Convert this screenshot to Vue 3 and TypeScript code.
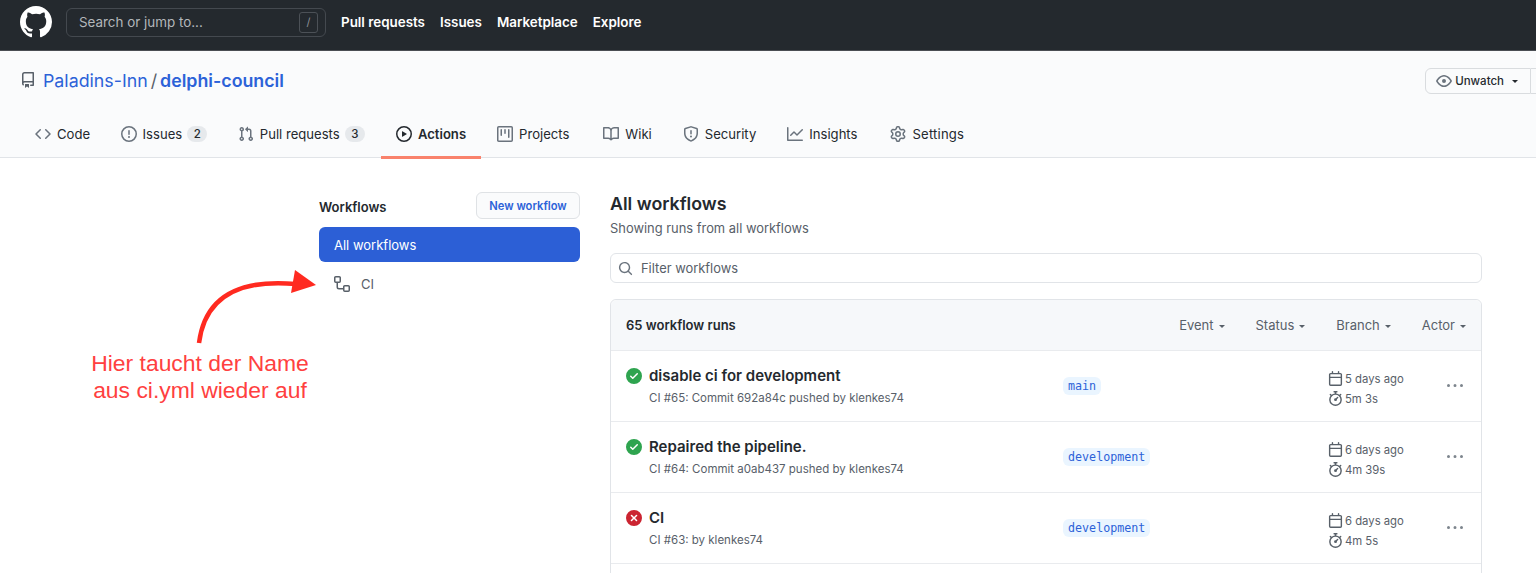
<script setup lang="ts">
const icons: Record<string, string> = {
  github: 'M8 0C3.58 0 0 3.58 0 8c0 3.54 2.29 6.53 5.47 7.59.4.07.55-.17.55-.38 0-.19-.01-.82-.01-1.49-2.01.37-2.53-.49-2.69-.94-.09-.23-.48-.94-.82-1.13-.28-.15-.68-.52-.01-.53.63-.01 1.08.58 1.23.82.72 1.21 1.87.87 2.33.66.07-.52.28-.87.51-1.07-1.78-.2-3.64-.89-3.64-3.95 0-.87.31-1.59.82-2.15-.08-.2-.36-1.02.08-2.12 0 0 .67-.21 2.2.82.64-.18 1.32-.27 2-.27.68 0 1.36.09 2 .27 1.53-1.04 2.2-.82 2.2-.82.44 1.1.16 1.92.08 2.12.51.56.82 1.27.82 2.15 0 3.07-1.87 3.75-3.65 3.95.29.25.54.73.54 1.48 0 1.07-.01 1.93-.01 2.2 0 .21.15.46.55.38A8.013 8.013 0 0016 8c0-4.42-3.58-8-8-8z',
  repo: 'M2 2.5A2.5 2.5 0 014.5 0h8.75a.75.75 0 01.75.75v12.5a.75.75 0 01-.75.75h-2.5a.75.75 0 110-1.5h1.75v-2h-8a1 1 0 00-.714 1.7.75.75 0 01-1.072 1.05A2.495 2.495 0 012 11.5v-9zm10.5-1V9h-8c-.356 0-.694.074-1 .208V2.5a1 1 0 011-1h8zM5 12.25v3.25a.25.25 0 00.4.2l1.45-1.087a.25.25 0 01.3 0L8.6 15.7a.25.25 0 00.4-.2v-3.25a.25.25 0 00-.25-.25h-3.5a.25.25 0 00-.25.25z',
  code: 'M4.72 3.22a.75.75 0 011.06 1.06L2.06 8l3.72 3.72a.75.75 0 11-1.06 1.06L.47 8.53a.75.75 0 010-1.06l4.25-4.25zm6.56 0a.75.75 0 10-1.06 1.06L13.94 8l-3.72 3.72a.75.75 0 101.06 1.06l4.25-4.25a.75.75 0 000-1.06l-4.25-4.25z',
  issue: 'M8 1.5a6.5 6.5 0 100 13 6.5 6.5 0 000-13zM0 8a8 8 0 1116 0A8 8 0 010 8zm9 3a1 1 0 11-2 0 1 1 0 012 0zm-.25-6.25a.75.75 0 00-1.5 0v3.5a.75.75 0 001.5 0v-3.5z',
  pull: 'M7.177 3.073L9.573.677A.25.25 0 0110 .854v4.792a.25.25 0 01-.427.177L7.177 3.427a.25.25 0 010-.354zM3.75 2.5a.75.75 0 100 1.5.75.75 0 000-1.5zm-2.25.75a2.25 2.25 0 113 2.122v5.256a2.251 2.251 0 11-1.5 0V5.372A2.25 2.25 0 011.5 3.25zM11 2.5h-1V4h1a1 1 0 011 1v5.628a2.251 2.251 0 101.5 0V5A2.5 2.5 0 0011 2.5zm1 10.25a.75.75 0 111.5 0 .75.75 0 01-1.5 0zM3.75 12a.75.75 0 100 1.5.75.75 0 000-1.5z',
  play: 'M1.5 8a6.5 6.5 0 1113 0 6.5 6.5 0 01-13 0zM8 0a8 8 0 100 16A8 8 0 008 0zM6.379 5.227A.25.25 0 006 5.442v5.117a.25.25 0 00.379.214l4.264-2.559a.25.25 0 000-.428L6.379 5.227z',
  project: 'M1.75 0A1.75 1.75 0 000 1.75v12.5C0 15.216.784 16 1.75 16h12.5A1.75 1.75 0 0016 14.25V1.75A1.75 1.75 0 0014.25 0H1.75zM1.5 1.75a.25.25 0 01.25-.25h12.5a.25.25 0 01.25.25v12.5a.25.25 0 01-.25.25H1.75a.25.25 0 01-.25-.25V1.75zM11.75 3a.75.75 0 00-.75.75v7.5a.75.75 0 001.5 0v-7.5a.75.75 0 00-.75-.75zm-8.25.75a.75.75 0 011.5 0v5.5a.75.75 0 01-1.5 0v-5.5zM8 3a.75.75 0 00-.75.75v3.5a.75.75 0 001.5 0v-3.5A.75.75 0 008 3z',
  book: 'M0 1.75A.75.75 0 01.75 1h4.253c1.227 0 2.317.59 3 1.501A3.744 3.744 0 0111.006 1h4.245a.75.75 0 01.75.75v10.5a.75.75 0 01-.75.75h-4.507a2.25 2.25 0 00-1.591.659l-.622.621a.75.75 0 01-1.06 0l-.622-.621A2.25 2.25 0 005.258 13H.75a.75.75 0 01-.75-.75V1.75zm8.755 3a2.25 2.25 0 012.25-2.25H14.5v9h-3.757c-.71 0-1.4.201-1.992.572l.004-7.322zm-1.504 7.324l.004-5.073-.002-2.253A2.25 2.25 0 005.003 2.5H1.5v9h3.757a3.75 3.75 0 011.994.574z',
  shield: 'M7.467.133a1.75 1.75 0 011.066 0l5.25 1.68A1.75 1.75 0 0115 3.48V7c0 1.566-.32 3.182-1.303 4.682-.983 1.498-2.585 2.813-5.032 3.855a1.7 1.7 0 01-1.33 0c-2.447-1.042-4.049-2.357-5.032-3.855C1.32 10.182 1 8.566 1 7V3.48a1.75 1.75 0 011.217-1.667l5.25-1.68zm.61 1.429a.25.25 0 00-.153 0l-5.25 1.68a.25.25 0 00-.174.238V7c0 1.358.275 2.666 1.057 3.86.784 1.194 2.121 2.34 4.366 3.297a.2.2 0 00.154 0c2.245-.956 3.582-2.104 4.366-3.298C13.225 9.666 13.5 8.36 13.5 7V3.48a.25.25 0 00-.174-.237l-5.25-1.68zM9 10.5a1 1 0 11-2 0 1 1 0 012 0zm-.25-5.75a.75.75 0 10-1.5 0v3a.75.75 0 001.5 0v-3z',
  graph: 'M1.5 1.75a.75.75 0 00-1.5 0v12.5c0 .414.336.75.75.75h14.5a.75.75 0 000-1.5H1.5V1.75zm14.28 2.53a.75.75 0 00-1.06-1.06L10 7.94 7.53 5.47a.75.75 0 00-1.06 0L3.22 8.72a.75.75 0 001.06 1.06L7 7.06l2.47 2.47a.75.75 0 001.06 0l5.25-5.25z',
  gear: 'M7.429 1.525a6.593 6.593 0 011.142 0c.036.003.108.036.137.146l.289 1.105c.147.56.55.967.997 1.189.174.086.341.183.501.29.417.278.97.423 1.53.27l1.102-.303c.11-.03.175.016.195.046.219.31.41.641.573.989.014.031.022.11-.059.19l-.815.806c-.411.406-.562.957-.53 1.456a4.588 4.588 0 010 .582c-.032.499.119 1.05.53 1.456l.815.806c.08.08.073.159.059.19a6.494 6.494 0 01-.573.99c-.02.029-.086.074-.195.045l-1.103-.303c-.559-.153-1.112-.008-1.529.27-.16.107-.327.204-.5.29-.449.222-.851.628-.998 1.189l-.289 1.105c-.029.11-.101.143-.137.146a6.613 6.613 0 01-1.142 0c-.036-.003-.108-.037-.137-.146l-.289-1.105c-.147-.56-.55-.967-.997-1.189a4.502 4.502 0 01-.501-.29c-.417-.278-.97-.423-1.53-.27l-1.102.303c-.11.03-.175-.016-.195-.046a6.492 6.492 0 01-.573-.989c-.014-.031-.022-.11.059-.19l.815-.806c.411-.406.562-.957.53-1.456a4.587 4.587 0 010-.582c.032-.499-.119-1.05-.53-1.456l-.815-.806c-.08-.08-.073-.159-.059-.19a6.44 6.44 0 01.573-.99c.02-.029.086-.075.195-.045l1.103.303c.559.153 1.112.008 1.529-.27.16-.107.327-.204.5-.29.449-.222.851-.628.998-1.189l.289-1.105c.029-.11.101-.143.137-.146zM8 0c-.236 0-.47.01-.701.03-.743.065-1.29.615-1.458 1.261l-.29 1.106c-.017.066-.078.158-.211.224a5.994 5.994 0 00-.668.386c-.123.082-.233.09-.3.071L3.27 2.776c-.644-.177-1.392.02-1.82.63a7.977 7.977 0 00-.704 1.217c-.315.675-.111 1.422.363 1.891l.815.806c.05.048.098.147.088.294a6.084 6.084 0 000 .772c.01.147-.038.246-.088.294l-.815.806c-.474.469-.678 1.216-.363 1.891.2.428.436.835.704 1.218.428.609 1.176.806 1.82.63l1.103-.303c.066-.019.176-.011.299.071.213.143.436.272.668.386.133.066.194.158.212.224l.289 1.106c.169.646.715 1.196 1.458 1.26a8.094 8.094 0 001.402 0c.743-.064 1.29-.614 1.458-1.26l.29-1.106c.017-.066.078-.158.211-.224a5.98 5.98 0 00.668-.386c.123-.082.233-.09.3-.071l1.102.302c.644.177 1.392-.02 1.82-.63.268-.382.505-.789.704-1.217.315-.675.111-1.422-.364-1.891l-.814-.806c-.05-.048-.098-.147-.088-.294a6.1 6.1 0 000-.772c-.01-.147.039-.246.088-.294l.814-.806c.475-.469.679-1.216.364-1.891a7.992 7.992 0 00-.704-1.218c-.428-.609-1.176-.806-1.82-.63l-1.103.303c-.066.019-.176.011-.299-.071a5.991 5.991 0 00-.668-.386c-.133-.066-.194-.158-.212-.224L10.16 1.29C9.99.645 9.444.095 8.701.031A8.094 8.094 0 008 0zm1.5 8a1.5 1.5 0 11-3 0 1.5 1.5 0 013 0zM11 8a3 3 0 11-6 0 3 3 0 016 0z',
  workflow: 'M0 1.75C0 .784.784 0 1.75 0h3.5C6.216 0 7 .784 7 1.75v3.5A1.75 1.75 0 015.25 7H4v4a1 1 0 001 1h4v-1.25C9 9.784 9.784 9 10.75 9h3.5c.966 0 1.75.784 1.75 1.75v3.5A1.75 1.75 0 0114.25 16h-3.5A1.75 1.75 0 019 14.25V13.5H5A2.5 2.5 0 012.5 11V7h-.75A1.75 1.75 0 010 5.25v-3.5zm1.75-.25a.25.25 0 00-.25.25v3.5c0 .138.112.25.25.25h3.5a.25.25 0 00.25-.25v-3.5a.25.25 0 00-.25-.25h-3.5zm9 9a.25.25 0 00-.25.25v3.5c0 .138.112.25.25.25h3.5a.25.25 0 00.25-.25v-3.5a.25.25 0 00-.25-.25h-3.5z',
  calendar: 'M4.75 0a.75.75 0 01.75.75V2h5V.75a.75.75 0 011.5 0V2h1.25c.966 0 1.75.784 1.75 1.75v10.5A1.75 1.75 0 0113.25 16H2.75A1.75 1.75 0 011 14.25V3.75C1 2.784 1.784 2 2.75 2H4V.75A.75.75 0 014.75 0zm0 3.5h8.5a.25.25 0 01.25.25V6h-11V3.75a.25.25 0 01.25-.25h2zm-2.25 4v6.75c0 .138.112.25.25.25h10.5a.25.25 0 00.25-.25V7.5h-11z',
  stopwatch: 'M5.75.75A.75.75 0 016.5 0h3a.75.75 0 010 1.5h-.75v1l-.001.041a6.718 6.718 0 013.464 1.435l.007-.006.75-.75a.75.75 0 111.06 1.06l-.75.75-.006.007a6.75 6.75 0 11-10.548 0L2.72 5.03l-.75-.75a.75.75 0 011.06-1.06l.75.75.007.006A6.718 6.718 0 017.25 2.541a.756.756 0 010-.041v-1H6.5a.75.75 0 01-.75-.75zM8 14.5A5.25 5.25 0 108 4a5.25 5.25 0 000 10.5zm.389-6.7l1.33-1.33a.75.75 0 111.061 1.06L9.45 8.861A1.502 1.502 0 018 10.75a1.5 1.5 0 11.389-2.95z',
  kebab: 'M8 9a1.5 1.5 0 100-3 1.5 1.5 0 000 3zM1.5 9a1.5 1.5 0 100-3 1.5 1.5 0 000 3zm13 0a1.5 1.5 0 100-3 1.5 1.5 0 000 3z',
  check: 'M8 16A8 8 0 108 0a8 8 0 000 16zm3.78-9.72a.75.75 0 00-1.06-1.06L6.75 9.19 5.28 7.72a.75.75 0 00-1.06 1.06l2 2a.75.75 0 001.06 0l4.5-4.5z',
  cross: 'M2.343 13.657A8 8 0 1113.657 2.343 8 8 0 012.343 13.657zM6.03 4.97a.75.75 0 00-1.06 1.06L6.94 8 4.97 9.97a.75.75 0 101.06 1.06L8 9.06l1.97 1.97a.75.75 0 101.06-1.06L9.06 8l1.97-1.97a.75.75 0 10-1.06-1.06L8 6.94 6.03 4.97z',
  eye: 'M1.679 7.932c.412-.621 1.242-1.75 2.366-2.717C5.175 4.242 6.527 3.5 8 3.5c1.473 0 2.824.742 3.955 1.715 1.124.967 1.954 2.096 2.366 2.717a.119.119 0 010 .136c-.412.621-1.242 1.75-2.366 2.717C10.825 11.758 9.473 12.5 8 12.5c-1.473 0-2.824-.742-3.955-1.715C2.92 9.818 2.09 8.69 1.679 8.068a.119.119 0 010-.136zM8 2c-1.981 0-3.67.992-4.933 2.078C1.797 5.169.88 6.423.43 7.1a1.619 1.619 0 000 1.798c.45.678 1.367 1.932 2.637 3.024C4.329 13.008 6.019 14 8 14c1.981 0 3.67-.992 4.933-2.078 1.27-1.091 2.187-2.345 2.637-3.023a1.619 1.619 0 000-1.798c-.45-.678-1.367-1.932-2.637-3.023C11.671 2.992 9.981 2 8 2zm0 8a2 2 0 100-4 2 2 0 000 4z',
  search: 'M11.5 7a4.499 4.499 0 11-8.998 0A4.499 4.499 0 0111.5 7zm-.82 4.74a6 6 0 111.06-1.06l3.04 3.04a.75.75 0 11-1.06 1.06l-3.04-3.04z',
}

const tabs = [
  { label: 'Code', icon: 'code' },
  { label: 'Issues', icon: 'issue', count: 2 },
  { label: 'Pull requests', icon: 'pull', count: 3 },
  { label: 'Actions', icon: 'play', active: true },
  { label: 'Projects', icon: 'project' },
  { label: 'Wiki', icon: 'book' },
  { label: 'Security', icon: 'shield' },
  { label: 'Insights', icon: 'graph' },
  { label: 'Settings', icon: 'gear' },
]

const filters = ['Event', 'Status', 'Branch', 'Actor']

const runs = [
  { title: 'disable ci for development', sub: 'CI #65: Commit 692a84c pushed by klenkes74', branch: 'main', when: '5 days ago', took: '5m 3s', ok: true },
  { title: 'Repaired the pipeline.', sub: 'CI #64: Commit a0ab437 pushed by klenkes74', branch: 'development', when: '6 days ago', took: '4m 39s', ok: true },
  { title: 'CI', sub: 'CI #63: by klenkes74', branch: 'development', when: '6 days ago', took: '4m 5s', ok: false },
]
</script>

<template>
  <div class="page">
    <header class="topbar">
      <svg class="logo" viewBox="0 0 16 16"><path :d="icons.github" /></svg>
      <div class="search">
        <span>Search or jump to...</span>
        <kbd>/</kbd>
      </div>
      <nav class="topnav">
        <a>Pull requests</a>
        <a>Issues</a>
        <a>Marketplace</a>
        <a>Explore</a>
      </nav>
    </header>

    <section class="repohead">
      <div class="repotitle">
        <div class="crumbs">
          <svg class="ico repoico" viewBox="0 0 16 16"><path :d="icons.repo" /></svg>
          <a class="owner">Paladins-Inn</a>
          <span class="slash">/</span>
          <a class="name">delphi-council</a>
        </div>
        <div class="btngroup">
          <button class="btn">
            <svg class="ico" viewBox="0 0 16 16"><path :d="icons.eye" /></svg>
            <span>Unwatch</span>
            <i class="caret"></i>
          </button>
          <button class="btn count"></button>
        </div>
      </div>
      <nav class="tabs">
        <a v-for="tab in tabs" :key="tab.label" class="tab" :class="{ active: tab.active }">
          <svg class="ico" viewBox="0 0 16 16"><path :d="icons[tab.icon]" /></svg>
          <span>{{ tab.label }}</span>
          <em v-if="tab.count" class="counter">{{ tab.count }}</em>
        </a>
      </nav>
    </section>

    <main class="main">
      <aside class="sidebar">
        <div class="sidehead">
          <h3>Workflows</h3>
          <button class="newbtn">New workflow</button>
        </div>
        <a class="sideitem selected">All workflows</a>
        <a class="sideitem">
          <svg class="ico" viewBox="0 0 16 16"><path :d="icons.workflow" /></svg>
          <span>CI</span>
        </a>
      </aside>

      <div class="content">
        <h2>All workflows</h2>
        <p class="subtitle">Showing runs from all workflows</p>
        <div class="filter">
          <svg class="ico" viewBox="0 0 16 16"><path :d="icons.search" /></svg>
          <span>Filter workflows</span>
        </div>
        <div class="box">
          <div class="boxhead">
            <strong>65 workflow runs</strong>
            <div class="dropdowns">
              <span v-for="f in filters" :key="f" class="dropdown">{{ f }}<i class="caret"></i></span>
            </div>
          </div>
          <div v-for="run in runs" :key="run.sub" class="row">
            <svg class="status" :class="run.ok ? 'ok' : 'fail'" viewBox="0 0 16 16">
              <path :d="run.ok ? icons.check : icons.cross" />
            </svg>
            <div class="info">
              <div class="title">{{ run.title }}</div>
              <div class="sub">{{ run.sub }}</div>
            </div>
            <div class="branchcol"><code class="branch">{{ run.branch }}</code></div>
            <div class="times">
              <div>
                <svg class="ico" viewBox="0 0 16 16"><path :d="icons.calendar" /></svg>{{ run.when }}
              </div>
              <div>
                <svg class="ico" viewBox="0 0 16 16"><path :d="icons.stopwatch" /></svg>{{ run.took }}
              </div>
            </div>
            <svg class="ico kebab" viewBox="0 0 16 16"><path :d="icons.kebab" /></svg>
          </div>
          <div class="row"></div>
        </div>
      </div>
    </main>

    <!-- Anmerkung ueber dem Screenshot -->
    <svg class="arrow" width="140" height="90" viewBox="0 0 140 90">
      <path d="M7 75 C12 36 38 10 104 16" fill="none" stroke="#ff2a20" stroke-width="4.5" />
      <path d="M103 2 L124 17 L99 25 Z" fill="#ff2a20" />
    </svg>
    <div class="note">Hier taucht der Name<br />aus ci.yml wieder auf</div>
  </div>
</template>

<style scoped>
.page {
  position: relative;
  width: 1536px;
  height: 573px;
  overflow: hidden;
  background: #fff;
  color: #24292e;
  font-family: Inter, "Liberation Sans", sans-serif;
  font-size: 14px;
}

svg path {
  fill-rule: evenodd;
}

.ico {
  width: 16px;
  height: 16px;
  fill: #6a737d;
  flex: none;
}

/* top bar */
.topbar {
  height: 50px;
  background: #24292e;
  border-bottom: 1px solid #4a4e53;
  display: flex;
  align-items: center;
  padding-left: 20px;
}

.logo {
  width: 32px;
  height: 32px;
  fill: #fff;
  flex: none;
  margin-top: -6px;
}

.search {
  width: 260px;
  height: 29px;
  margin-left: 14px;
  margin-top: -6px;
  border: 1px solid #44494f;
  border-radius: 6px;
  box-sizing: border-box;
  display: flex;
  align-items: center;
  justify-content: space-between;
  padding: 0 7px 0 12px;
  color: #b3b7bb;
  font-size: 13.4px;
}

kbd {
  width: 17px;
  height: 19px;
  border: 1px solid #4c5157;
  border-radius: 3px;
  text-align: center;
  font: 11px/19px Inter, sans-serif;
  color: #8b9096;
}

.topnav {
  display: flex;
  gap: 15px;
  margin-left: 15px;
  margin-top: -6px;
}

.topnav a {
  color: #fff;
  font-weight: 600;
  font-size: 13.4px;
}

/* repo head */
.repohead {
  height: 107px;
  box-sizing: border-box;
  background: #fafbfc;
  border-bottom: 1px solid #e1e4e8;
}

.repotitle {
  display: flex;
  justify-content: space-between;
  align-items: center;
  padding: 15px 0 0 20px;
  margin-right: -40px;
}

.crumbs {
  display: flex;
  align-items: center;
  font-size: 17.8px;
  color: #586069;
}

.repoico {
  margin-right: 7px;
  fill: #586069;
}

.owner {
  color: #2c62d8;
}

.slash {
  margin: 0 3px;
}

.name {
  color: #2c62d8;
  font-weight: 600;
}

.btngroup {
  display: flex;
  margin-top: 2px;
}

.btn {
  height: 26px;
  padding: 0 12px 0 10px;
  box-sizing: border-box;
  display: flex;
  align-items: center;
  gap: 3px;
  border: 1px solid #d9dcdf;
  border-radius: 6px 0 0 6px;
  background: #fafbfc;
  color: #24292e;
  font: 500 11.5px Inter, sans-serif;
}

.btn.count {
  border-left: 0;
  border-radius: 0 6px 6px 0;
  width: 45px;
}

.caret {
  display: inline-block;
  width: 0;
  height: 0;
  margin-left: 5px;
  border: 3.5px solid transparent;
  border-top-color: currentColor;
  border-bottom: 0;
  vertical-align: middle;
}

.tabs {
  display: flex;
  gap: 1px;
  padding-left: 20px;
  margin-top: 18px;
}

.tab {
  height: 47px;
  box-sizing: border-box;
  padding: 0 15px;
  display: flex;
  align-items: center;
  gap: 6px;
  color: #24292e;
  font-size: 13.1px;
  border-bottom: 3px solid transparent;
}

.tab:nth-child(2),
.tab:nth-child(3) {
  margin-left: -0.5px;
}

.tab:nth-child(6) {
  margin-left: 3px;
}

.tab:nth-child(9) {
  margin-left: 2px;
  letter-spacing: 0.2px;
}

.tab.active {
  font-weight: 600;
  border-bottom-color: #f9826c;
}

.tab.active .ico {
  fill: #24292e;
}

.counter {
  font-style: normal;
  font-size: 11.5px;
  font-weight: 500;
  background: #e6e9ec;
  border-radius: 10px;
  padding: 1px 6.5px;
  margin-left: -1px;
}

/* main */
.main {
  display: flex;
  gap: 30px;
  padding: 34px 0 0 319px;
}

.sidebar {
  width: 261px;
  flex: none;
}

.sidehead {
  display: flex;
  justify-content: space-between;
  align-items: center;
  margin-bottom: 8px;
}

h3 {
  margin: 2px 0 0;
  font-size: 13px;
  font-weight: 600;
}

.newbtn {
  width: 104px;
  height: 27px;
  border: 1px solid #dfe2e5;
  border-radius: 6px;
  background: #fafbfc;
  color: #2c62d8;
  font: 600 11.2px Inter, sans-serif;
}

.sideitem {
  height: 35px;
  display: flex;
  align-items: center;
  gap: 11px;
  padding-left: 15px;
  border-radius: 6px;
  font-size: 13px;
  color: #586069;
}

.sideitem.selected {
  background: #2c5fd6;
  color: #fff;
  margin-bottom: 4px;
}

.sideitem .ico {
  fill: #586069;
}

.content {
  width: 872px;
  flex: none;
}

h2 {
  margin: 0;
  font-size: 17.8px;
  line-height: 24px;
  font-weight: 600;
}

.subtitle {
  margin: 3px 0 0;
  font-size: 12.9px;
  line-height: 20px;
  color: #586069;
}

.filter {
  margin-top: 14px;
  height: 30px;
  box-sizing: border-box;
  border: 1px solid #e1e4e8;
  border-radius: 6px;
  display: flex;
  align-items: center;
  gap: 8px;
  padding-left: 7px;
  font-size: 12.9px;
  color: #586069;
}

.filter .ico {
  width: 15px;
  height: 15px;
}

.box {
  margin-top: 16px;
  border: 1px solid #e1e4e8;
  border-radius: 6px;
  box-sizing: border-box;
}

.boxhead {
  height: 50px;
  background: #f6f8fa;
  border-radius: 6px 6px 0 0;
  display: flex;
  align-items: center;
  justify-content: space-between;
  padding: 0 15px;
}

.boxhead strong {
  font-weight: 600;
  font-size: 13px;
}

.dropdowns {
  display: flex;
  gap: 31px;
}

.dropdown {
  color: #586069;
  font-size: 13px;
}

.row {
  height: 71px;
  box-sizing: border-box;
  border-top: 1px solid #e9ebee;
  display: flex;
  align-items: center;
  padding-left: 15px;
}

.status {
  width: 16px;
  height: 16px;
  flex: none;
  align-self: flex-start;
  margin-top: 17px;
}

.status.ok {
  fill: #2ea44f;
}

.status.fail {
  fill: #cb2431;
}

.info {
  width: 414px;
  flex: none;
  margin-left: 7px;
}

.title {
  font-size: 15px;
  font-weight: 600;
  line-height: 22px;
}

.sub {
  font-size: 11.5px;
  line-height: 18px;
  margin-top: 2px;
  color: #586069;
}

.branchcol {
  width: 265px;
  flex: none;
  margin-bottom: 2px;
}

.branch {
  display: inline-block;
  padding: 0 5px;
  line-height: 18px;
  border-radius: 6px;
  background: #eaf5ff;
  color: #2c62d8;
  font-family: "DejaVu Sans Mono", monospace;
  font-size: 11.7px;
}

.times {
  width: 119px;
  flex: none;
  margin-top: 5px;
  font-size: 11.3px;
  color: #586069;
  line-height: 20px;
}

.times div {
  display: flex;
  align-items: center;
}

.times .ico {
  width: 15px;
  height: 15px;
  margin-right: 2px;
  fill: #586069;
}

.kebab {
  fill: #7d858d;
  margin-bottom: 1px;
}

/* annotation */
.arrow {
  position: absolute;
  left: 192px;
  top: 268px;
}

.note {
  position: absolute;
  left: 60px;
  top: 350px;
  width: 280px;
  text-align: center;
  color: #ff4040;
  font-family: "Liberation Sans", Arial, sans-serif;
  font-size: 22.9px;
  line-height: 27px;
}
</style>

<style>
html, body {
  margin: 0;
  overflow: hidden;
}
</style>
